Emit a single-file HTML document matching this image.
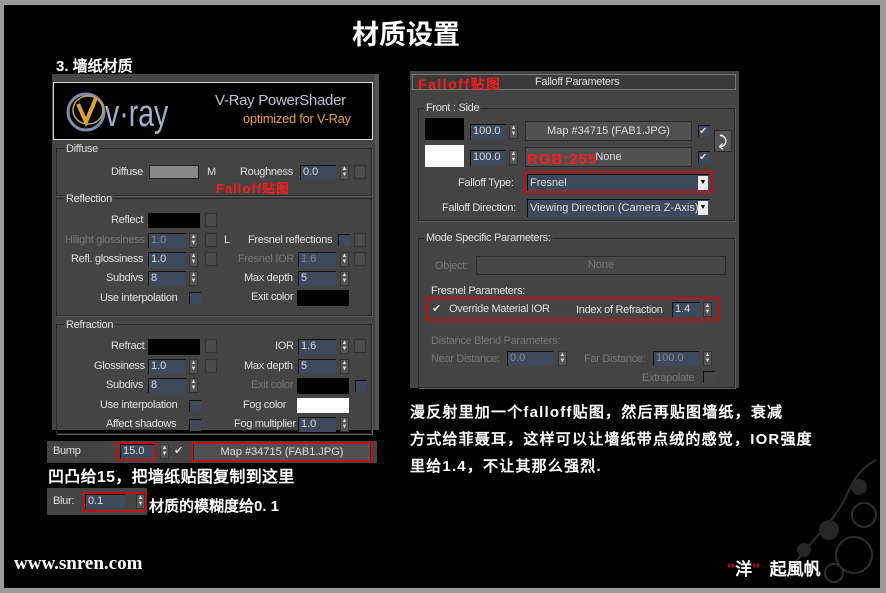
<!DOCTYPE html>
<html><head><meta charset="utf-8"><style>
*{margin:0;padding:0;box-sizing:border-box}
body{width:886px;height:593px;background:#9a9a9a;position:relative;overflow:hidden;font-family:"Liberation Sans","Noto Sans CJK SC",sans-serif}
#bg{position:absolute;left:4px;top:5px;width:876px;height:583px;background:#000;overflow:hidden}
.a{position:absolute}
.t{position:absolute;font-size:11px;color:#e0e0e0;white-space:nowrap;letter-spacing:-0.3px}
.d{color:#777}
.pn{position:absolute;background:#444}
.grp{position:absolute;border:1px solid #2a2a2a;box-shadow:1px 1px 0 #5a5a5a}
.sp{position:absolute;background:#3c4a5c;border-top:1px solid #111;border-left:1px solid #111;color:#ddd;font-size:11px;padding-left:2px;line-height:13px;height:15px}
.ar{position:absolute;width:9px;height:15px;background:#555;border:1px solid #333;color:#ddd;font-size:6px;line-height:6px;text-align:center}
.sq{position:absolute;width:12px;height:14px;border:1px solid #333;background:#4a4a4a}
.cb{position:absolute;width:12px;height:12px;background:#3c4a5c;border-top:1px solid #111;border-left:1px solid #111}
.btn{position:absolute;background:#505050;border:1px solid #2c2c2c;color:#ddd;font-size:11px;text-align:center;line-height:17px}
.red{position:absolute;border:2px solid #c01010}
.cn{position:absolute;color:#fff;font-weight:bold;font-size:15px;white-space:nowrap;font-family:"Liberation Sans","WenQuanYi Zen Hei",sans-serif}
</style></head><body>
<div id="bg">
<div class="a" style="left:348px;top:12px;color:#fff;font-size:27px;font-weight:bold;font-family:'Noto Sans CJK SC',sans-serif;line-height:32px">材质设置</div>
<div class="cn" style="left:52px;top:50px;font-size:15px">3. 墙纸材质</div>

<div class="pn" style="left:48px;top:69px;width:327px;height:356px">
 <div class="a" style="right:0;top:0;width:4px;height:356px;background:#555"></div>
 <div class="a" style="left:1px;top:8px;width:320px;height:58px;background:#000;border:1px solid #ddd">
  <svg class="a" style="left:12px;top:5px" width="110" height="50"><ellipse cx="20" cy="24" rx="18" ry="18" fill="none" stroke="#7a8fb0" stroke-width="3"/><ellipse cx="22" cy="22" rx="15" ry="14" fill="none" stroke="#c8a050" stroke-width="1.5"/><path d="M12 16 L20 34 L30 10" stroke="#e0a030" stroke-width="4" fill="none"/><text x="52" y="38" fill="#9fb0cc" font-size="38" font-family="Liberation Sans Narrow,Liberation Sans" transform="scale(0.75,1)">v·ray</text></svg>
  <div class="t" style="left:161px;top:9px;font-size:15px;color:#b8c4dc">V-Ray PowerShader</div>
  <div class="t" style="left:189px;top:28px;font-size:13px;color:#e8a040">optimized for V-Ray</div>
 </div>
 <div class="grp" style="left:4px;top:74px;width:316px;height:48px"></div>
 <div class="t" style="left:12px;top:69px;background:#444;padding:0 2px">Diffuse</div>
 <div class="t" style="left:59px;top:92px">Diffuse</div>
 <div class="a" style="left:97px;top:91px;width:50px;height:14px;background:#888;border:1px solid #222"></div>
 <div class="t" style="left:155px;top:92px">M</div>
 <div class="t" style="left:188px;top:92px">Roughness</div>
 <div class="sp" style="left:248px;top:91px;width:36px">0.0</div><div class="ar" style="left:288px;top:91px">▲<br>▼</div><div class="sq" style="left:302px;top:91px"></div>
 <div class="t" style="left:164px;top:104px;color:#ff1a1a;font-weight:bold;font-size:13px;letter-spacing:1px">Falloff贴图</div>
 <div class="grp" style="left:4px;top:124px;width:316px;height:118px"></div>
 <div class="t" style="left:12px;top:119px;background:#444;padding:0 2px">Reflection</div>
 <div class="t" style="left:59px;top:140px">Reflect</div>
 <div class="a" style="left:96px;top:139px;width:52px;height:15px;background:#000"></div><div class="sq" style="left:153px;top:139px"></div>
 <div class="t d" style="left:13px;top:160px">Hilight glossiness</div>
 <div class="sp" style="left:96px;top:159px;width:38px;color:#888">1.0</div><div class="ar" style="left:137px;top:159px">▲<br>▼</div><div class="sq" style="left:153px;top:159px"></div><div class="t" style="left:172px;top:160px">L</div>
 <div class="t" style="left:196px;top:160px">Fresnel reflections</div><div class="cb" style="left:286px;top:160px"></div><div class="sq" style="left:302px;top:159px"></div>
 <div class="t" style="left:19px;top:179px">Refl. glossiness</div>
 <div class="sp" style="left:96px;top:178px;width:38px">1.0</div><div class="ar" style="left:137px;top:178px">▲<br>▼</div><div class="sq" style="left:153px;top:178px"></div>
 <div class="t d" style="left:186px;top:179px">Fresnel IOR</div><div class="sp" style="left:246px;top:178px;width:38px;color:#888">1.6</div><div class="ar" style="left:288px;top:178px">▲<br>▼</div><div class="sq" style="left:302px;top:178px"></div>
 <div class="t" style="left:54px;top:198px">Subdivs</div><div class="sp" style="left:96px;top:197px;width:38px">8</div><div class="ar" style="left:137px;top:197px">▲<br>▼</div>
 <div class="t" style="left:192px;top:198px">Max depth</div><div class="sp" style="left:246px;top:197px;width:38px">5</div><div class="ar" style="left:288px;top:197px">▲<br>▼</div>
 <div class="t" style="left:48px;top:218px">Use interpolation</div><div class="cb" style="left:137px;top:218px"></div>
 <div class="t" style="left:199px;top:217px">Exit color</div><div class="a" style="left:245px;top:216px;width:52px;height:16px;background:#000"></div>
 <div class="grp" style="left:4px;top:250px;width:316px;height:110px"></div>
 <div class="t" style="left:12px;top:245px;background:#444;padding:0 2px">Refraction</div>
 <div class="t" style="left:59px;top:266px">Refract</div><div class="a" style="left:96px;top:265px;width:52px;height:16px;background:#000"></div><div class="sq" style="left:153px;top:265px"></div>
 <div class="t" style="left:223px;top:266px">IOR</div><div class="sp" style="left:246px;top:265px;width:38px">1.6</div><div class="ar" style="left:288px;top:265px">▲<br>▼</div><div class="sq" style="left:302px;top:265px"></div>
 <div class="t" style="left:42px;top:286px">Glossiness</div><div class="sp" style="left:96px;top:285px;width:38px">1.0</div><div class="ar" style="left:137px;top:285px">▲<br>▼</div><div class="sq" style="left:153px;top:285px"></div>
 <div class="t" style="left:192px;top:286px">Max depth</div><div class="sp" style="left:246px;top:285px;width:38px">5</div><div class="ar" style="left:288px;top:285px">▲<br>▼</div>
 <div class="t" style="left:54px;top:305px">Subdivs</div><div class="sp" style="left:96px;top:304px;width:38px">8</div><div class="ar" style="left:137px;top:304px">▲<br>▼</div>
 <div class="t d" style="left:199px;top:305px">Exit color</div><div class="a" style="left:245px;top:304px;width:52px;height:16px;background:#000"></div><div class="cb" style="left:303px;top:306px"></div>
 <div class="t" style="left:48px;top:325px">Use interpolation</div><div class="cb" style="left:137px;top:326px"></div>
 <div class="t" style="left:191px;top:325px">Fog color</div><div class="a" style="left:245px;top:324px;width:52px;height:15px;background:#fff"></div>
 <div class="t" style="left:54px;top:344px">Affect shadows</div><div class="cb" style="left:137px;top:345px"></div>
 <div class="t" style="left:182px;top:344px">Fog multiplier</div><div class="sp" style="left:246px;top:343px;width:38px">1.0</div><div class="ar" style="left:288px;top:343px">▲<br>▼</div>
</div>

<div class="pn" style="left:43px;top:436px;width:330px;height:22px">
 <div class="t" style="left:6px;top:4px">Bump</div>
 <div class="sp" style="left:73px;top:3px;width:36px">15.0</div><div class="red" style="left:69px;top:1px;width:40px;height:19px"></div>
 <div class="ar" style="left:113px;top:3px">▲<br>▼</div>
 <div class="a" style="left:127px;top:4px;width:12px;height:12px;color:#ddd;font-size:11px;line-height:12px">✔</div>
 <div class="btn" style="left:146px;top:2px;width:178px;height:18px">Map #34715 (FAB1.JPG)</div><div class="red" style="left:144px;top:1px;width:182px;height:20px"></div>
</div>
<div class="cn" style="left:44px;top:458px;font-size:16px;letter-spacing:0.3px">凹凸给15，把墙纸贴图复制到这里</div>
<div class="pn" style="left:43px;top:483px;width:100px;height:27px">
 <div class="t" style="left:6px;top:7px">Blur:</div>
 <div class="sp" style="left:38px;top:6px;width:40px">0.1</div><div class="ar" style="left:89px;top:6px">▲<br>▼</div>
 <div class="red" style="left:36px;top:4px;width:64px;height:20px"></div>
</div>
<div class="cn" style="left:145px;top:490px">材质的模糊度给0. 1</div>

<div class="pn" style="left:406px;top:66px;width:329px;height:317px">
 <div class="a" style="left:2px;top:3px;width:324px;height:16px;border:1px solid #777;background:#3a3a3a"></div>
 <div class="t" style="left:8px;top:3px;color:#ff1a1a;font-weight:bold;font-size:14px;letter-spacing:1.5px">Falloff贴图</div>
 <div class="t" style="left:125px;top:5px">Falloff Parameters</div>
 <div class="grp" style="left:8px;top:37px;width:317px;height:113px"></div>
 <div class="t" style="left:14px;top:31px;background:#444;padding:0 2px">Front : Side</div>
 <div class="a" style="left:15px;top:47px;width:39px;height:22px;background:#000"></div>
 <div class="sp" style="left:60px;top:53px;width:36px;height:16px">100.0</div><div class="ar" style="left:99px;top:53px">▲<br>▼</div>
 <div class="btn" style="left:115px;top:50px;width:167px;height:20px;line-height:19px">Map #34715 (FAB1.JPG)</div>
 <div class="cb" style="left:288px;top:54px;color:#ddd;font-size:10px;line-height:11px">✔</div>
 <div class="a" style="left:304px;top:59px;width:18px;height:22px;background:#555;border:1px solid #2a2a2a;color:#fff;font-size:14px;text-align:center;line-height:20px;font-weight:bold">⤸</div>
 <div class="a" style="left:15px;top:74px;width:39px;height:22px;background:#fff"></div>
 <div class="sp" style="left:60px;top:79px;width:36px;height:16px">100.0</div><div class="ar" style="left:99px;top:79px">▲<br>▼</div>
 <div class="btn" style="left:115px;top:76px;width:167px;height:20px;line-height:19px">None</div>
 <div class="cb" style="left:288px;top:80px;color:#ddd;font-size:10px;line-height:11px">✔</div>
 <div class="t" style="left:117px;top:80px;color:#ff1a1a;font-weight:bold;font-size:15px;letter-spacing:1px">RGB:255</div>
 <div class="t" style="left:48px;top:106px">Falloff Type:</div>
 <div class="sp" style="left:117px;top:103px;width:183px;height:18px;line-height:16px">Fresnel</div><div class="a" style="left:288px;top:105px;width:10px;height:14px;background:#eee;color:#000;font-size:7px;text-align:center;line-height:14px">▼</div>
 <div class="red" style="left:114px;top:100px;width:189px;height:22px"></div>
 <div class="t" style="left:32px;top:131px">Falloff Direction:</div>
 <div class="sp" style="left:117px;top:128px;width:183px;height:18px;line-height:16px">Viewing Direction (Camera Z-Axis)</div><div class="a" style="left:288px;top:130px;width:10px;height:14px;background:#eee;color:#000;font-size:7px;text-align:center;line-height:14px">▼</div>
 <div class="grp" style="left:8px;top:167px;width:317px;height:150px"></div>
 <div class="t" style="left:14px;top:161px;background:#444;padding:0 2px">Mode Specific Parameters:</div>
 <div class="t d" style="left:25px;top:189px">Object:</div>
 <div class="btn" style="left:66px;top:185px;width:250px;height:19px;color:#777;background:#474747">None</div>
 <div class="t" style="left:21px;top:214px">Fresnel Parameters:</div>
 <div class="a" style="left:22px;top:231px;color:#ddd;font-size:11px">✔</div>
 <div class="t" style="left:39px;top:232px">Override Material IOR</div>
 <div class="t" style="left:166px;top:233px">Index of Refraction</div>
 <div class="sp" style="left:262px;top:231px;width:28px">1.4</div><div class="ar" style="left:293px;top:231px">▲<br>▼</div>
 <div class="red" style="left:16px;top:226px;width:294px;height:24px"></div>
 <div class="t d" style="left:21px;top:264px">Distance Blend Parameters:</div>
 <div class="t d" style="left:21px;top:282px">Near Distance:</div><div class="sp" style="left:97px;top:280px;width:46px;color:#888">0.0</div><div class="ar" style="left:148px;top:280px">▲<br>▼</div>
 <div class="t d" style="left:174px;top:282px">Far Distance:</div><div class="sp" style="left:243px;top:280px;width:46px;color:#888">100.0</div><div class="ar" style="left:293px;top:280px">▲<br>▼</div>
 <div class="t d" style="left:232px;top:301px">Extrapolate</div><div class="cb" style="left:293px;top:300px;background:#474747"></div>
</div>

<div class="cn" style="left:406px;top:394px;line-height:27px;font-size:15px;letter-spacing:1.2px">漫反射里加一个falloff贴图，然后再贴图墙纸，衰减<br>方式给菲聂耳，这样可以让墙纸带点绒的感觉，IOR强度<br>里给1.4，不让其那么强烈.</div>

<svg class="a" style="left:780px;top:450px;opacity:0.45" width="96" height="133"><g fill="none" stroke="#666" stroke-width="2"><circle cx="70" cy="100" r="18"/><circle cx="50" cy="118" r="9"/><circle cx="80" cy="60" r="12"/><path d="M10 110 C30 80 50 70 65 35 C72 20 82 10 92 5"/></g><g fill="#555"><circle cx="45" cy="75" r="10"/><circle cx="20" cy="95" r="7"/><circle cx="75" cy="32" r="8"/></g></svg>
<div class="a" style="left:10px;top:548px;color:#fff;font-family:'Liberation Serif',serif;font-size:19px;font-weight:bold">www.snren.com</div>
<div class="cn" style="left:723px;top:550px;font-size:17px"><span style="color:#c00">"</span>洋<span style="color:#c00">"</span>&nbsp;&nbsp;起風帆</div>
</div>
</body></html>
